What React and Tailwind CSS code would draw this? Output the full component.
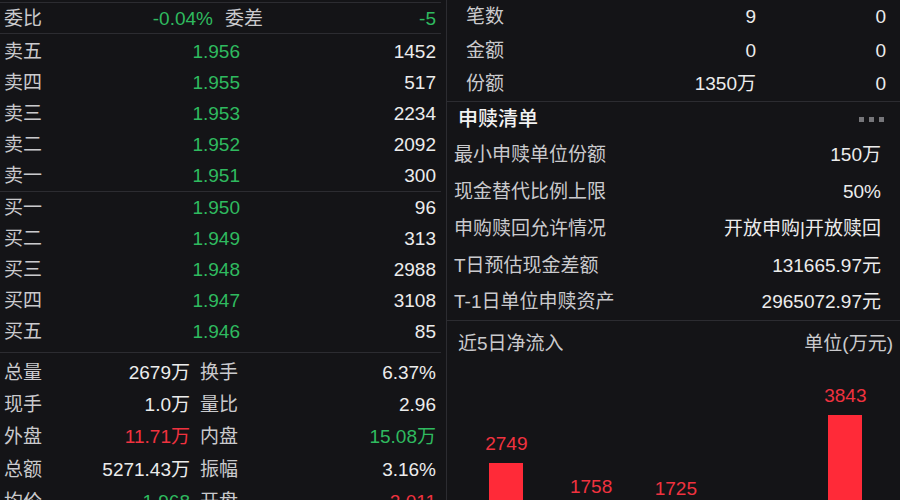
import React from 'react';

const FONT = { fontFamily: '"Liberation Sans", "Noto Sans CJK SC", sans-serif' };

const asks = [
  ['卖五', '1.956', '1452'],
  ['卖四', '1.955', '517'],
  ['卖三', '1.953', '2234'],
  ['卖二', '1.952', '2092'],
  ['卖一', '1.951', '300'],
];

const bids = [
  ['买一', '1.950', '96'],
  ['买二', '1.949', '313'],
  ['买三', '1.948', '2988'],
  ['买四', '1.947', '3108'],
  ['买五', '1.946', '85'],
];

const stats = [
  ['总量', '2679万', '', '换手', '6.37%', ''],
  ['现手', '1.0万', '', '量比', '2.96', ''],
  ['外盘', '11.71万', 'up', '内盘', '15.08万', 'down'],
  ['总额', '5271.43万', '', '振幅', '3.16%', ''],
  ['均价', '1.968', 'down', '开盘', '2.011', 'up'],
];

const flows = [
  ['笔数', '9', '0'],
  ['金额', '0', '0'],
  ['份额', '1350万', '0'],
];

const basket = [
  ['最小申赎单位份额', '150万'],
  ['现金替代比例上限', '50%'],
  ['申购赎回允许情况', '开放申购|开放赎回'],
  ['T日预估现金差额', '131665.97元'],
  ['T-1日单位申赎资产', '2965072.97元'],
];

// 近5日净流入, 万元
const inflow = [2749, 1758, 1725, 862, 3843];

const tone = (t) =>
  t === 'up' ? 'text-[#f0323f]' : t === 'down' ? 'text-[#2fba5f]' : 'text-[#ececec]';

function BookRow({ label, price, vol }) {
  return (
    <div className="flex h-[31px] items-center pl-[4px] pr-[5px]">
      <span className="w-[120px] text-[#cacacd]">{label}</span>
      <span className="w-[116px] text-right text-[#2fba5f]">{price}</span>
      <span className="flex-1 text-right text-[#ececec]">{vol}</span>
    </div>
  );
}

function StatRow({ row }) {
  const [l1, v1, t1, l2, v2, t2] = row;
  return (
    <div className="flex h-[32.3px] items-center pl-[4px] pr-[5px]">
      <div className="flex w-[186px] justify-between">
        <span className="text-[#cacacd]">{l1}</span>
        <span className={tone(t1)}>{v1}</span>
      </div>
      <div className="ml-[10px] flex flex-1 justify-between">
        <span className="text-[#cacacd]">{l2}</span>
        <span className={tone(t2)}>{v2}</span>
      </div>
    </div>
  );
}

function Bar({ value }) {
  const h = value * 0.0439;
  return (
    <div className="flex w-[84.75px] flex-col items-center justify-end">
      <span className="mb-[8px] text-[19px] leading-[22px] text-[#f0323f]">{value}</span>
      <div className="w-[34px] bg-[#ff2a38]" style={{ height: h }} />
    </div>
  );
}

export default function App() {
  return (
    <div
      className="flex h-[500px] w-[900px] overflow-hidden bg-[#141417] text-[19px] leading-none"
      style={FONT}
    >
      {/* 盘口 */}
      <div className="w-[441px] shrink-0 pt-[2px]">
        <div className="flex h-[32px] items-center border-y border-[#2c2c31] pl-[4px] pr-[5px]">
          <div className="flex w-[209px] justify-between">
            <span className="text-[#cacacd]">委比</span>
            <span className="text-[#2fba5f]">-0.04%</span>
          </div>
          <div className="ml-[12px] flex flex-1 justify-between">
            <span className="text-[#cacacd]">委差</span>
            <span className="text-[#2fba5f]">-5</span>
          </div>
        </div>
        <div className="border-b border-[#2c2c31] pt-[2px]">
          {asks.map(([l, p, v]) => (
            <BookRow key={l} label={l} price={p} vol={v} />
          ))}
        </div>
        <div className="border-b border-[#2c2c31] pb-[5px]">
          {bids.map(([l, p, v]) => (
            <BookRow key={l} label={l} price={p} vol={v} />
          ))}
        </div>
        <div className="pt-[3px]">
          {stats.map((r) => (
            <StatRow key={r[0]} row={r} />
          ))}
        </div>
      </div>

      {/* 申赎 */}
      <div className="ml-[5px] flex-1 border-l border-[#2c2c31]">
        <div className="border-b border-[#2c2c31]">
          {flows.map(([l, a, b]) => (
            <div key={l} className="flex h-[33.5px] items-center pl-[19px] pr-[14px]">
              <span className="text-[#cacacd]">{l}</span>
              <span className="ml-auto text-[#ececec]">{a}</span>
              <span className="w-[130px] text-right text-[#ececec]">{b}</span>
            </div>
          ))}
        </div>

        <div className="border-b border-[#2c2c31]">
          <div className="flex h-[35px] items-center pl-[11px] pr-[16px]">
            <span className="text-[20px] font-medium text-[#f2f2f2]">申赎清单</span>
            <div className="ml-auto flex gap-[5px]">
              <span className="h-[5px] w-[5px] bg-[#76767a]" />
              <span className="h-[5px] w-[5px] bg-[#76767a]" />
              <span className="h-[5px] w-[5px] bg-[#76767a]" />
            </div>
          </div>
          {basket.map(([l, v]) => (
            <div key={l} className="flex h-[36.75px] items-center pl-[7px] pr-[19px]">
              <span className="text-[#cacacd]">{l}</span>
              <span className="ml-auto text-[#ececec]">{v}</span>
            </div>
          ))}
        </div>

        <div className="flex h-[44px] items-center pl-[11px] pr-[7px]">
          <span className="text-[#cacacd]">近5日净流入</span>
          <span className="ml-auto text-[#cacacd]">单位(万元)</span>
        </div>
        <div className="flex h-[218px] items-end pl-[17px]">
          {inflow.map((v, i) => (
            <Bar key={i} value={v} />
          ))}
        </div>
      </div>
    </div>
  );
}
